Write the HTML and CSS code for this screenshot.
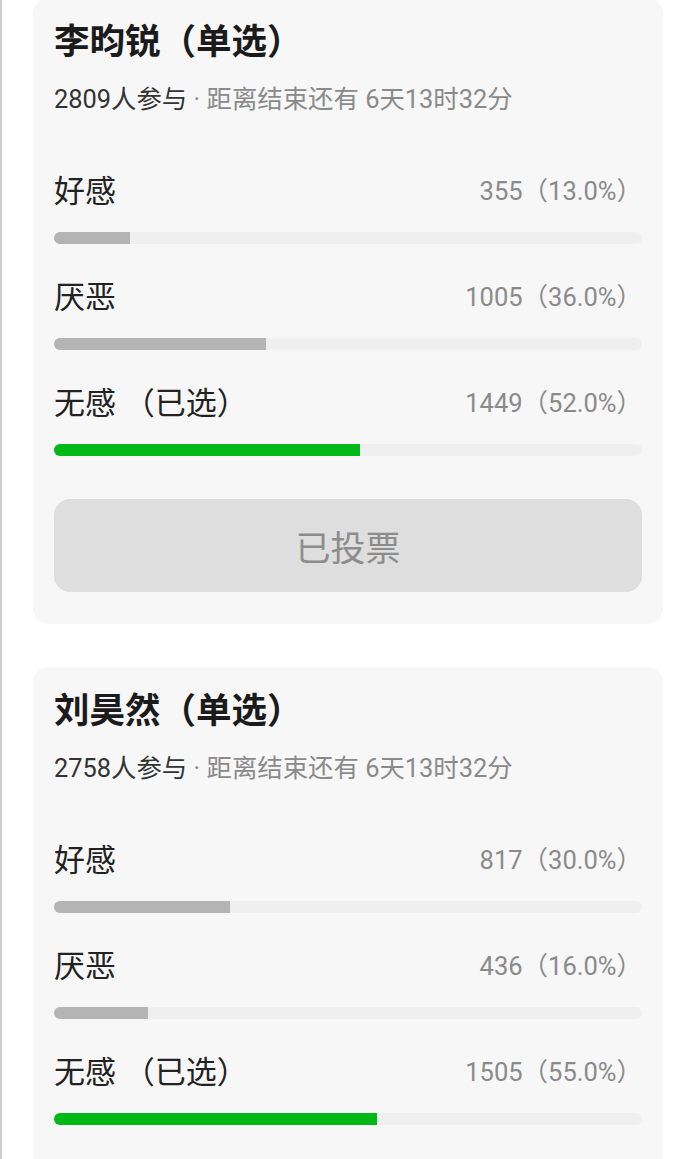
FILE: index.html
```html
<!DOCTYPE html>
<html>
<head>
    <meta charset="utf-8">
    <title>投票</title>
    <link rel="stylesheet" href="styles.css">
</head>
<body>
    <div class="page">
        <div class="poll">
            <h2 class="poll-title">李昀锐（单选）</h2>
            <p class="poll-meta"><span class="count">2809人参与</span> · 距离结束还有 6天13时32分</p>
            <ul class="options">
                <li class="option">
                    <div class="option-head">
                        <span class="option-name">好感</span>
                        <span class="option-count">355（13.0%）</span>
                    </div>
                    <div class="track"><div class="fill" style="width: 13%"></div></div>
                </li>
                <li class="option">
                    <div class="option-head">
                        <span class="option-name">厌恶</span>
                        <span class="option-count">1005（36.0%）</span>
                    </div>
                    <div class="track"><div class="fill" style="width: 36%"></div></div>
                </li>
                <li class="option">
                    <div class="option-head">
                        <span class="option-name">无感 （已选）</span>
                        <span class="option-count">1449（52.0%）</span>
                    </div>
                    <div class="track"><div class="fill chosen" style="width: 52%"></div></div>
                </li>
            </ul>
            <button class="vote-btn" disabled>已投票</button>
        </div>

        <div class="poll poll-last">
            <h2 class="poll-title">刘昊然（单选）</h2>
            <p class="poll-meta"><span class="count">2758人参与</span> · 距离结束还有 6天13时32分</p>
            <ul class="options">
                <li class="option">
                    <div class="option-head">
                        <span class="option-name">好感</span>
                        <span class="option-count">817（30.0%）</span>
                    </div>
                    <div class="track"><div class="fill" style="width: 30%"></div></div>
                </li>
                <li class="option">
                    <div class="option-head">
                        <span class="option-name">厌恶</span>
                        <span class="option-count">436（16.0%）</span>
                    </div>
                    <div class="track"><div class="fill" style="width: 16%"></div></div>
                </li>
                <li class="option">
                    <div class="option-head">
                        <span class="option-name">无感 （已选）</span>
                        <span class="option-count">1505（55.0%）</span>
                    </div>
                    <div class="track"><div class="fill chosen" style="width: 55%"></div></div>
                </li>
            </ul>
        </div>
    </div>
</body>
</html>
```

FILE: styles.css
```css
body {
    margin: 0;
    background-color: white;
    font-family: Roboto, "Noto Sans CJK SC", sans-serif;
}
.page {
    height: 1159px;
    overflow: hidden;
    border-left: 2px solid #cfcfcf;
    padding-left: 31px;
    padding-right: 27px;
}
.poll {
    background-color: #f7f7f7;
    border-radius: 16px;
    padding: 20px 21px 32px;
    margin-bottom: 43px;
}
.poll:first-child {
    margin-top: -2px;
}
.poll-last {
    padding-bottom: 60px;
}
.poll-title {
    margin: 0;
    font-size: 35.5px;
    line-height: 48px;
    font-weight: bold;
    color: #1b1b1b;
}
.poll-meta {
    margin: 18px 0 0;
    font-size: 25.4px;
    line-height: 30px;
    color: #8a8a8a;
}
.count {
    color: #333;
}
.options {
    list-style: none;
    margin: 56px 0 0;
    padding: 0;
    display: flex;
    flex-direction: column;
    gap: 32px;
}
.option-head {
    display: flex;
    justify-content: space-between;
    align-items: center;
    height: 36px;
    margin-bottom: 26px;
}
.option-name {
    font-size: 31px;
    color: #222;
}
.option-count {
    font-size: 25.5px;
    color: #8a8a8a;
}
.track {
    height: 12px;
    border-radius: 6px;
    background-color: #efefef;
    overflow: hidden;
}
.fill {
    height: 100%;
    background-color: #b4b4b4;
}
.fill.chosen {
    background-color: #00b816;
}
.vote-btn {
    display: block;
    width: 100%;
    height: 93px;
    margin-top: 43px;
    border: none;
    border-radius: 16px;
    background-color: #dedede;
    color: #8c8c8c;
    font-family: inherit;
    font-size: 35px;
}
```
